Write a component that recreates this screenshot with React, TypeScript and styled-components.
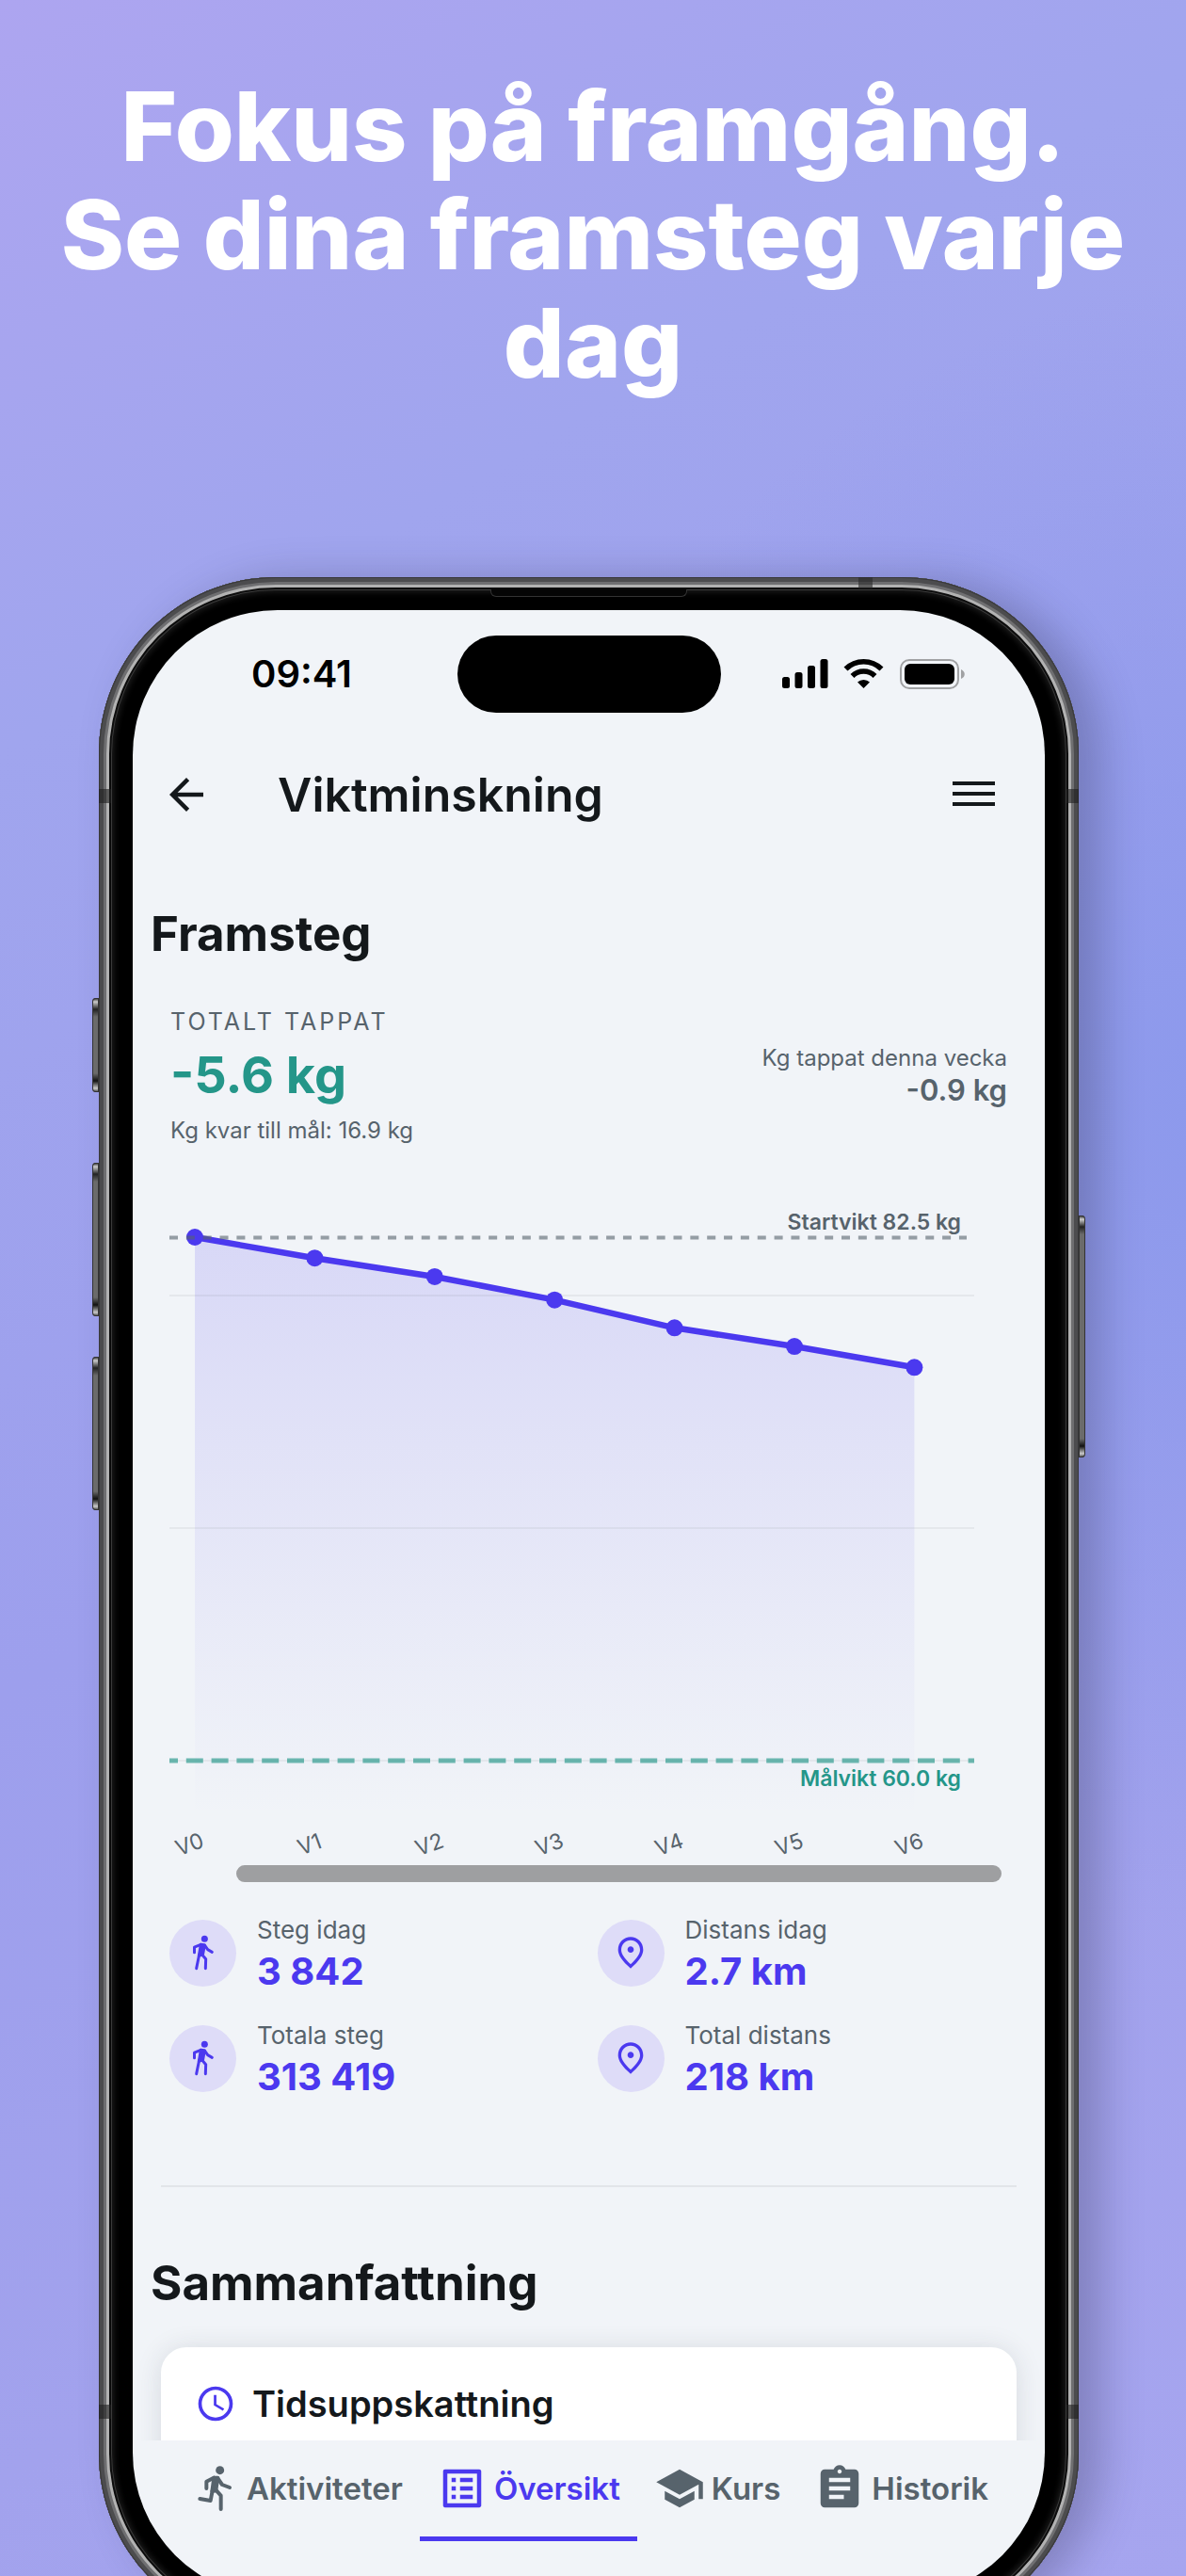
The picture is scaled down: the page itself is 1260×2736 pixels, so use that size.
import React from "react";
import styled, { createGlobalStyle, css } from "styled-components";
import {
  MdAccessTime,
  MdArrowBack,
  MdAssignment,
  MdListAlt,
  MdOutlinePlace,
  MdSchool,
} from "react-icons/md";

const color = {
  ink: "#14181b",
  muted: "#57636c",
  accent: "#4b39ef",
  good: "#249689",
  surface: "#f1f4f8",
  line: "#e2e5e9",
};

const GlobalStyle = createGlobalStyle`
  *, *::before, *::after { box-sizing: border-box; }
  body {
    margin: 0;
    font-family: Inter, "Liberation Sans", sans-serif;
  }
  h1, h2, h3, p { margin: 0; }
`;

const Poster = styled.main`
  height: 100vh;
  overflow: hidden;
  padding: 77px 40px 0;
  background:
    radial-gradient(ellipse 60% 32% at 104% 43%, #8c99ec 0%, rgba(142, 154, 236, 0) 100%),
    linear-gradient(150deg, #ada5f0 0%, #a0a5ee 23%, #9d9fed 52%, #a2a2ed 76%, #a6a5ef 100%);
`;

const Headline = styled.h1`
  color: #fff;
  font-size: 102px;
  line-height: 115px;
  font-weight: 800;
  text-align: center;
`;

const Phone = styled.section`
  position: relative;
  margin: 191px 74px 0 65px;
  aspect-ratio: 1041 / 2181;
  padding: 35px 36px;
  border-radius: 188px;
  background: #000;
  box-shadow:
    inset 0 0 0 1px #38383a,
    inset 0 0 0 5px #4c4c4e,
    inset 0 0 0 8px #6f6f71,
    inset 0 0 0 11px #b2b2b2,
    inset 0 0 0 13px #0c0c0c,
    inset 0 0 0 14px #3a3a3a,
    inset 0 0 6px 16px #1c1c1c,
    24px 2px 44px rgba(40, 40, 70, 0.28);
`;

const SideKey = styled.span<{ $side: "left" | "right"; $top: number; $length: number }>`
  position: absolute;
  ${(p) => p.$side}: -7px;
  top: ${(p) => p.$top}px;
  width: 7px;
  height: ${(p) => p.$length}px;
  border-radius: ${(p) => (p.$side === "left" ? "4px 0 0 4px" : "0 4px 4px 0")};
  background: linear-gradient(#222, #ccc 4px, #222 12px, #6b6b6b 20px, #6b6b6b calc(100% - 20px), #111 calc(100% - 12px), #ccc calc(100% - 4px), #333);
  box-shadow: inset 0 0 0 1px #333;
`;

const Band = styled.span<{ $side: "left" | "right"; $top: number }>`
  position: absolute;
  ${(p) => p.$side}: 0;
  top: ${(p) => p.$top}px;
  width: 13px;
  height: 15px;
  background: rgba(30, 30, 30, 0.6);
`;

const TopBand = styled.span`
  position: absolute;
  top: 0;
  right: 219px;
  width: 15px;
  height: 12px;
  background: rgba(40, 40, 40, 0.6);
`;

const Earpiece = styled.span`
  position: absolute;
  top: 13px;
  left: 40%;
  right: 40%;
  height: 8px;
  background: #050505;
  border: solid #333;
  border-width: 0 1px 1px;
  border-radius: 0 0 6px 6px;
`;

const Screen = styled.div`
  height: 100%;
  display: flex;
  flex-direction: column;
  overflow: hidden;
  border-radius: 154px;
  background: ${color.surface};
`;

const StatusBar = styled.div`
  flex: none;
  display: grid;
  grid-template-columns: 1fr 280px 1fr;
  align-items: center;
  height: 136px;
`;

const Clock = styled.time`
  justify-self: start;
  margin-left: 126px;
  color: #000;
  font-size: 40px;
  line-height: 48px;
  font-weight: 600;
`;

const Island = styled.div`
  height: 82px;
  border-radius: 41px;
  background: #000;
`;

const StatusIcons = styled.svg`
  display: block;
  justify-self: end;
  margin-right: 84px;
`;

const AppBar = styled.header`
  flex: none;
  display: flex;
  align-items: center;
  height: 120px;
  padding: 0 43px 0 30px;
`;

const IconButton = styled.button`
  display: grid;
  place-items: center;
  padding: 0;
  border: 0;
  background: none;
  color: ${color.ink};
`;

const Title = styled.h2`
  flex: 1;
  margin-left: 70px;
  color: ${color.ink};
  font-size: 50px;
  line-height: 64px;
  font-weight: 600;
`;

const Content = styled.div`
  flex: 1;
  min-height: 0;
  overflow: hidden;
  padding: 56px 30px 0;
`;

const SectionTitle = styled.h2<{ $spaced?: boolean }>`
  margin: ${(p) => (p.$spaced ? "70px" : "0")} -11px 0;
  color: ${color.ink};
  font-size: 51px;
  line-height: 64px;
  font-weight: 700;
`;

const Totals = styled.div`
  display: flex;
  justify-content: space-between;
  align-items: center;
  padding: 43px 10px 0;
`;

const TotalLabel = styled.p`
  color: ${color.muted};
  font-size: 25px;
  line-height: 36px;
  letter-spacing: 3px;
  text-transform: uppercase;
`;

const TotalValue = styled.p`
  color: ${color.good};
  font-size: 54px;
  line-height: 78px;
  font-weight: 700;
`;

const Caption = styled.p`
  color: ${color.muted};
  font-size: 24px;
  line-height: 40px;
`;

const Week = styled.div`
  padding-bottom: 4px;
  text-align: right;
`;

const WeekLabel = styled(Caption)`
  line-height: 32px;
`;

const WeekValue = styled.p`
  color: ${color.muted};
  font-size: 31px;
  line-height: 36px;
  font-weight: 600;
`;

const ChartDrawing = styled.svg`
  display: block;
  width: 100%;
  height: auto;
  font-family: Inter, "Liberation Sans", sans-serif;
`;

const ScrollThumb = styled.div`
  height: 18px;
  margin: 0 16px 0 80px;
  border-radius: 9px;
  background: #9e9fa1;
`;

const Stats = styled.div`
  display: grid;
  grid-template-columns: 1fr 1fr;
  row-gap: 24px;
  padding: 31px 0 0 9px;
  margin-right: -9px;
`;

const Stat = styled.div`
  display: flex;
  align-items: center;
  gap: 22px;
`;

const Bubble = styled.span`
  display: grid;
  place-items: center;
  width: 71px;
  height: 71px;
  border-radius: 50%;
  background: #dedcf8;
  color: ${color.accent};
`;

const StatLabel = styled.p`
  color: ${color.muted};
  font-size: 26px;
  line-height: 40px;
`;

const StatValue = styled.p`
  color: ${color.accent};
  font-size: 40px;
  line-height: 48px;
  font-weight: 700;
`;

const Divider = styled.hr`
  height: 2px;
  margin: 91px 0 0;
  border: 0;
  background: ${color.line};
`;

const Card = styled.article`
  display: flex;
  align-items: center;
  gap: 17px;
  margin-top: 36px;
  padding: 36px 36px 60px;
  border-radius: 27px;
  background: #fff;
  color: ${color.accent};
  box-shadow: 0 2px 28px rgba(40, 50, 60, 0.13);
`;

const CardTitle = styled.h3`
  color: ${color.ink};
  font-size: 38px;
  line-height: 48px;
  font-weight: 600;
`;

const Tabs = styled.nav`
  flex: none;
  display: flex;
  justify-content: center;
  padding-bottom: 60px;
`;

const Tab = styled.a<{ $active?: boolean }>`
  display: flex;
  align-items: center;
  gap: 7px;
  height: 107px;
  padding: 0 18px;
  border-bottom: 5px solid transparent;
  color: ${color.muted};
  font-size: 33px;
  line-height: 44px;
  font-weight: 600;
  text-decoration: none;
  ${(p) =>
    p.$active &&
    css`
      border-color: ${color.accent};
      color: ${color.accent};
    `}
`;

const chart = {
  x: (week: number) => 36 + week * 127.4,
  y: (kg: number) => 93 + (82.5 - kg) * 24.69,
};

const weights = [82.5, 81.6, 80.8, 79.8, 78.6, 77.8, 76.9];

function WeightChart() {
  const points = weights.map((kg, week) => [chart.x(week), chart.y(kg)] as const);
  const line = points.map(([x, y]) => `${x},${y}`).join(" ");
  const [lastX] = points[points.length - 1];
  return (
    <ChartDrawing viewBox="0 0 909 760" role="img" aria-label="Vikt per vecka">
      <defs>
        <linearGradient id="fade" x1="0" y1="93" x2="0" y2="709" gradientUnits="userSpaceOnUse">
          <stop offset="0" stopColor={color.accent} stopOpacity="0.15" />
          <stop offset="1" stopColor={color.accent} stopOpacity="0" />
        </linearGradient>
      </defs>
      <polygon points={`${points[0][0]},709 ${line} ${lastX},709`} fill="url(#fade)" />
      {[155, 402, 649].map((y) => (
        <path key={y} d={`M9 ${y}H864`} stroke="#57636c" strokeOpacity="0.08" strokeWidth="2" />
      ))}
      <polyline points={line} fill="none" stroke={color.accent} strokeWidth="6.5" strokeLinejoin="round" />
      {points.map(([x, y]) => (
        <circle key={x} cx={x} cy={y} r="9" fill={color.accent} />
      ))}
      <path d="M9 93.5H856" stroke={color.muted} strokeOpacity="0.6" strokeWidth="4" strokeDasharray="9 8.85" />
      <path d="M9 649H864" stroke={color.good} strokeOpacity="0.65" strokeWidth="5" strokeDasharray="18 8.8" strokeDashoffset="9" />
      <text x="850" y="85" textAnchor="end" fontSize="23" fontWeight="600" fill={color.muted}>
        Startvikt 82.5 kg
      </text>
      <text x="850" y="676" textAnchor="end" fontSize="23" fontWeight="600" fill={color.good}>
        Målvikt 60.0 kg
      </text>
      {weights.map((_, week) => (
        <text
          key={week}
          transform={`translate(${chart.x(week) - 6} 737) rotate(-20)`}
          y="9"
          textAnchor="middle"
          fontSize="23"
          fill={color.muted}
        >
          {`V${week}`}
        </text>
      ))}
    </ChartDrawing>
  );
}

function WalkIcon({ size }: { size: number }) {
  return (
    <svg
      width={size}
      height={size}
      viewBox="78 74 120 120"
      fill="none"
      stroke="currentColor"
      strokeWidth="9"
      strokeLinecap="round"
      strokeLinejoin="round"
      aria-hidden="true"
    >
      <circle cx="142" cy="90" r="10.500" fill="currentColor" stroke="none" />
      <path d="M130 108L109.500 116.500V133" />
      <path d="M143 111L152 124L166 132" />
      <path d="M130 108L142 109L137 138L124 144Z" fill="currentColor" />
      <path d="M125 140L116 184" />
      <path d="M134 140L146 154L145 184" />
    </svg>
  );
}

function RunIcon({ size }: { size: number }) {
  return (
    <svg
      width={size}
      height={size}
      viewBox="14 274 162 162"
      fill="none"
      stroke="currentColor"
      strokeWidth="12"
      strokeLinecap="round"
      strokeLinejoin="round"
      aria-hidden="true"
    >
      <circle cx="112" cy="297" r="13.500" fill="currentColor" stroke="none" />
      <path d="M92 321L69 333V355" />
      <path d="M106 324L119 343L143 352" />
      <path d="M93 321L105 321L99 362L87 364Z" fill="currentColor" />
      <path d="M88 362L82 394L48 388" />
      <path d="M99 360L115 378V421" />
    </svg>
  );
}

const stats = [
  { label: "Steg idag", value: "3 842", Icon: WalkIcon },
  { label: "Distans idag", value: "2.7 km", Icon: MdOutlinePlace },
  { label: "Totala steg", value: "313 419", Icon: WalkIcon },
  { label: "Total distans", value: "218 km", Icon: MdOutlinePlace },
];

const tabs = [
  { label: "Aktiviteter", Icon: RunIcon },
  { label: "Översikt", Icon: MdListAlt, active: true },
  { label: "Kurs", Icon: MdSchool },
  { label: "Historik", Icon: MdAssignment },
];

function DeviceStatus() {
  return (
    <StatusIcons width="196" height="34" viewBox="0 0 196 34" aria-hidden="true">
      <rect x="1" y="20" width="8" height="12" rx="2.5" />
      <rect x="14.500" y="15" width="8" height="17" rx="2.500" />
      <rect x="28" y="8" width="8" height="24" rx="2.500" />
      <rect x="41.500" y="1" width="8" height="31" rx="2.500" />
      <g fill="none" stroke="#000" strokeWidth="5.600">
        <path d="M68.500 11.500a27 27 0 0 1 38 0" />
        <path d="M75.500 19a17 17 0 0 1 24 0" />
      </g>
      <path d="M87.500 32l-6.500-6.500a9.500 9.500 0 0 1 13 0z" />
      <rect x="127" y="2" width="61" height="30" rx="9" fill="none" stroke="#a0a1a3" strokeWidth="2" />
      <rect x="131" y="6" width="53" height="22" rx="6" />
      <path d="M191 12c5 2 5 8 0 10z" fill="#a0a1a3" />
    </StatusIcons>
  );
}

export default function App() {
  return (
    <Poster>
      <GlobalStyle />
      <Headline>
        Fokus på framgång.
        <br />
        Se dina framsteg varje dag
      </Headline>
      <Phone>
        <SideKey $side="left" $top={447} $length={100} />
        <SideKey $side="left" $top={622} $length={163} />
        <SideKey $side="left" $top={828} $length={163} />
        <SideKey $side="right" $top={678} $length={257} />
        <Band $side="left" $top={225} />
        <Band $side="right" $top={225} />
        <Band $side="left" $top={1941} />
        <Band $side="right" $top={1941} />
        <TopBand />
        <Earpiece />
        <Screen>
          <StatusBar>
            <Clock>09:41</Clock>
            <Island />
            <DeviceStatus />
          </StatusBar>
          <AppBar>
            <IconButton aria-label="Tillbaka">
              <MdArrowBack size={54} />
            </IconButton>
            <Title>Viktminskning</Title>
            <IconButton aria-label="Meny">
              <svg width="65" height="48" viewBox="0 0 65 48" stroke="currentColor" strokeWidth="4">
                <path d="M10 12h45M10 23h45M10 34h45" />
              </svg>
            </IconButton>
          </AppBar>
          <Content>
            <SectionTitle>Framsteg</SectionTitle>
            <Totals>
              <div>
                <TotalLabel>Totalt tappat</TotalLabel>
                <TotalValue>-5.6 kg</TotalValue>
                <Caption>Kg kvar till mål: 16.9 kg</Caption>
              </div>
              <Week>
                <WeekLabel>Kg tappat denna vecka</WeekLabel>
                <WeekValue>-0.9 kg</WeekValue>
              </Week>
            </Totals>
            <WeightChart />
            <ScrollThumb />
            <Stats>
              {stats.map(({ label, value, Icon }) => (
                <Stat key={label}>
                  <Bubble>
                    <Icon size={40} />
                  </Bubble>
                  <div>
                    <StatLabel>{label}</StatLabel>
                    <StatValue>{value}</StatValue>
                  </div>
                </Stat>
              ))}
            </Stats>
            <Divider />
            <SectionTitle $spaced>Sammanfattning</SectionTitle>
            <Card>
              <MdAccessTime size={44} />
              <CardTitle>Tidsuppskattning</CardTitle>
            </Card>
          </Content>
          <Tabs>
            {tabs.map(({ label, Icon, active }) => (
              <Tab key={label} href="#" $active={active} aria-current={active ? "page" : undefined}>
                <Icon size={54} />
                {label}
              </Tab>
            ))}
          </Tabs>
        </Screen>
      </Phone>
    </Poster>
  );
}
